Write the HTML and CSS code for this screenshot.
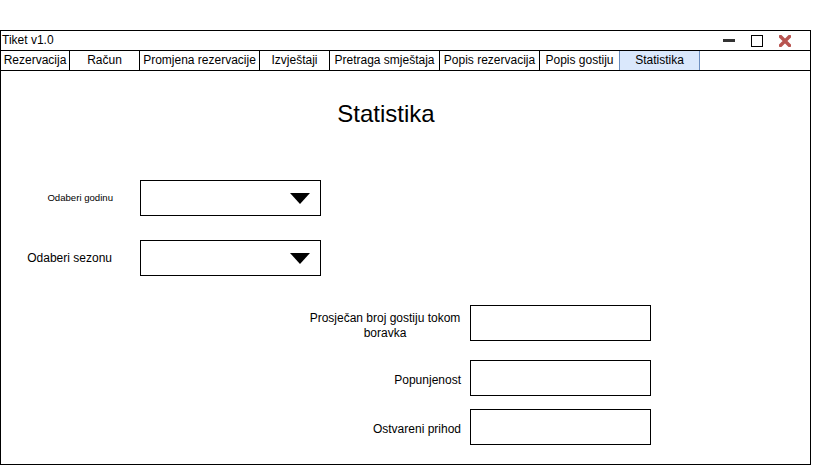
FILE: index.html
```html
<!DOCTYPE html>
<html lang="hr">
<head>
<meta charset="utf-8">
<title>Tiket v1.0</title>
<link rel="stylesheet" href="styles.css">
</head>
<body>
<div class="window">
  <div class="titlebar">
    <span class="title">Tiket v1.0</span>
    <div class="controls">
      <svg class="ico" width="12" height="12" viewBox="0 0 12 12"><rect x="0" y="4" width="12" height="3" fill="#333"/></svg>
      <svg class="ico" width="12" height="12" viewBox="0 0 12 12"><rect x="0.5" y="0.5" width="11" height="11" fill="none" stroke="#000"/></svg>
      <svg class="ico" width="12" height="12" viewBox="0 0 12 12"><path d="M1.5 1.5 L10.5 10.5 M10.5 1.5 L1.5 10.5" stroke="#b85450" stroke-width="3.4" stroke-linecap="square"/></svg>
    </div>
  </div>
  <div class="tabs">
    <div class="tab w70">Rezervacija</div>
    <div class="tab w70">Račun</div>
    <div class="tab w120">Promjena rezervacije</div>
    <div class="tab w70">Izvještaji</div>
    <div class="tab w110">Pretraga smještaja</div>
    <div class="tab w100">Popis rezervacija</div>
    <div class="tab w79 noborder">Popis gostiju</div>
    <div class="tab active">Statistika</div>
  </div>
  <div class="content">
    <h1 class="heading">Statistika</h1>
    <div class="row row-first">
      <div class="label-left small">Odaberi godinu</div>
      <div class="field select"><span class="caret"></span></div>
    </div>
    <div class="row row-second">
      <div class="label-left">Odaberi sezonu</div>
      <div class="field select"><span class="caret"></span></div>
    </div>
    <div class="row stat stat-a">
      <div class="label-right"><span class="wrap">Prosječan broj gostiju tokom boravka</span></div>
      <div class="field"></div>
    </div>
    <div class="row stat stat-b">
      <div class="label-right">Popunjenost</div>
      <div class="field"></div>
    </div>
    <div class="row stat stat-c">
      <div class="label-right">Ostvareni prihod</div>
      <div class="field"></div>
    </div>
  </div>
</div>
</body>
</html>
```
FILE: styles.css
```css
* { box-sizing: border-box; }
html, body { margin: 0; padding: 0; background: #fff; }
body {
  font-family: "Liberation Sans", Arial, sans-serif;
  font-size: 12px;
  color: #000;
}
.window {
  margin-top: 30px;
  width: 811px;
  height: 435px;
  border: 1px solid #000;
  display: flex;
  flex-direction: column;
}
.titlebar {
  height: 20px;
  border-bottom: 1px solid #000;
  display: flex;
  align-items: center;
  padding-left: 1px;
}
.title { line-height: 19px; }
.controls {
  margin-left: auto;
  display: flex;
  gap: 16px;
  padding-right: 19px;
  align-items: center;
}
.ico { display: block; }
.tabs {
  height: 20px;
  border-bottom: 1px solid #000;
  display: flex;
}
.tab {
  height: 19px;
  line-height: 18px;
  text-align: center;
  border-right: 1px solid #000;
  white-space: nowrap;
}
.w70 { width: 70px; }
.w70:first-child { width: 69px; }
.w120 { width: 120px; }
.w110 { width: 110px; }
.w100 { width: 100px; }
.w79 { width: 79px; }
.noborder { border-right: none; }
.tab.active {
  width: 81px;
  background: #dae8fc;
  border-left: 1px solid #6c8ebf;
  border-right: 1px solid #6c8ebf;
}
.content {
  flex: 1;
  display: flex;
  flex-direction: column;
}
.heading {
  margin: 29px 0 0 0;
  width: 770px;
  text-align: center;
  font-size: 24px;
  font-weight: normal;
  line-height: 28px;
  height: 28px;
}
.row {
  display: flex;
  align-items: center;
  height: 36px;
}
.row-first { margin-top: 52px; }
.row-second { margin-top: 24px; }
.label-left {
  width: 111px;
  margin-right: 28px;
  text-align: right;
  white-space: nowrap;
}
.label-left.small {
  font-size: 9.6px;
  padding-right: 0;
  margin-top: -2px;
  width: 112px;
  margin-right: 27px;
}
.field {
  width: 181px;
  height: 36px;
  border: 1px solid #000;
  background: #fff;
  position: relative;
}
.select {
  display: flex;
  align-items: center;
  justify-content: flex-end;
  padding-right: 10px;
}
.caret {
  width: 0;
  height: 0;
  border-left: 10px solid transparent;
  border-right: 10px solid transparent;
  border-top: 11px solid #000;
  margin-top: 1px;
}
.stat-a { margin-top: 29px; }
.stat-b { margin-top: 19px; }
.stat-c { margin-top: 13px; }
.label-right {
  width: 461px;
  padding-right: 1px;
  margin-right: 8px;
  text-align: right;
  white-space: nowrap;
}
.stat-b .label-right, .stat-c .label-right { padding-top: 3px; }
.wrap {
  display: inline-block;
  width: 152px;
  white-space: normal;
  text-align: center;
  line-height: 15px;
  padding-top: 5px;
}
```
